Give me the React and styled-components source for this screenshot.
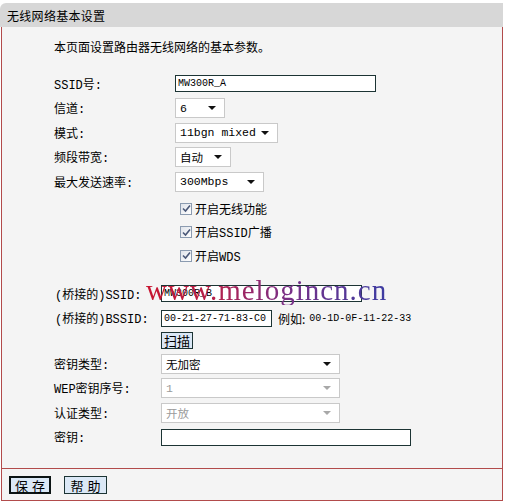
import React from "react";
import styled, { createGlobalStyle } from "styled-components";

const Global = createGlobalStyle`
  html, body {
    margin: 0;
    padding: 0;
    background: #ffffff;
  }
  body {
    font-family: "Noto Sans CJK SC", "Liberation Sans", sans-serif;
    font-size: 12px;
    color: #000;
  }
`;

const Panel = styled.div`
  margin: 3px 0 0 1px;
  width: 502px;
`;

const Header = styled.div`
  height: 24px;
  margin-left: -1px;
  width: 503px;
  background: #d7d7d7;
  border-radius: 6px 0 0 0;
  display: flex;
  align-items: center;
  padding-left: 7px;
  box-sizing: border-box;
  font-size: 12px;
  letter-spacing: 0.3px;
`;

const Body = styled.div`
  position: relative;
  background: #f4f4f4;
  border-left: 1px solid #b24b4b;
  border-right: 1px solid #b24b4b;
  padding: 10px 0 18px 52px;
  box-sizing: border-box;
`;

const Intro = styled.div`
  line-height: 20px;
  margin-bottom: 14.5px;
`;

const Section = styled.div`
  display: flex;
  flex-direction: column;
  margin-top: ${(p) => p.$top || 0}px;
`;

const Row = styled.div`
  position: relative;
  display: grid;
  grid-template-columns: ${(p) => p.$label}px auto;
  align-items: center;
  height: ${(p) => p.$h || 24.5}px;
`;

const Label = styled.span`
  font-family: "Liberation Mono", "Noto Sans CJK SC", monospace;
  font-size: 12px;
  padding-left: ${(p) => p.$indent || 0}px;
  white-space: nowrap;
`;

const Mono = styled.span`
  font-family: "Liberation Mono", monospace;
  font-size: 10px;
`;

const TextInput = styled.div`
  width: ${(p) => p.$w}px;
  height: 17px;
  box-sizing: border-box;
  border: 1px solid #1c3434;
  background: #fff;
  display: flex;
  align-items: center;
  padding-left: 2px;
  font-family: "Liberation Mono", monospace;
  font-size: 10px;
  overflow: hidden;
  white-space: nowrap;
`;

const Select = styled.div`
  width: ${(p) => p.$w}px;
  height: 20px;
  box-sizing: border-box;
  border: 1px solid #c9c9c9;
  background: #fff;
  display: flex;
  align-items: center;
  justify-content: space-between;
  gap: 4px;
  padding: 0 8px 0 4px;
  color: ${(p) => (p.$disabled ? "#9a9a9a" : "#000")};
  font-family: "Liberation Mono", "Noto Sans CJK SC", monospace;
  font-size: 11.5px;
  white-space: nowrap;
`;

const Arrow = styled.span`
  flex: none;
  width: 0;
  height: 0;
  border-left: 4px solid transparent;
  border-right: 4px solid transparent;
  border-top: 4px solid ${(p) => (p.$disabled ? "#a8a8a8" : "#111")};
`;

const CheckRow = styled.div`
  display: flex;
  align-items: center;
  height: 23.5px;
  padding-left: 126px;
  gap: 3px;
  font-family: "Liberation Mono", "Noto Sans CJK SC", monospace;
  font-size: 12px;
`;

const Box = styled.span`
  width: 12px;
  height: 12px;
  box-sizing: border-box;
  border: 1px solid #8b9bb0;
  background: linear-gradient(135deg, #dfe3ea, #ffffff);
  display: flex;
  align-items: center;
  justify-content: center;
`;

const Inline = styled.div`
  display: flex;
  align-items: center;
  gap: 6px;
`;

const Example = styled.span`
  display: flex;
  align-items: center;
  gap: 4px;
  font-size: 12px;
  white-space: nowrap;
`;

const Button = styled.button`
  font-family: "Noto Sans CJK SC", sans-serif;
  font-size: 13px;
  line-height: 1;
  width: ${(p) => (p.$w ? `${p.$w}px` : "auto")};
  height: ${(p) => p.$h || 17}px;
  padding: 0 0 0 ${(p) => (p.$ls ? p.$ls : 2)}px;
  padding-right: ${(p) => (p.$ls ? 0 : 2)}px;
  background: #dbe8f6;
  color: #000;
  border: ${(p) => (p.$bold ? "2px solid #0c1414" : "1px solid #1c3434")};
  border-radius: 0;
  letter-spacing: ${(p) => p.$ls || 0}px;
  white-space: nowrap;
  display: flex;
  align-items: center;
  justify-content: center;
  cursor: pointer;
`;

const Watermark = styled.div`
  position: absolute;
  left: 92px;
  top: -6px;
  font-family: "Liberation Serif", serif;
  font-size: 29px;
  line-height: 29px;
  letter-spacing: 1px;
  white-space: nowrap;
  background: linear-gradient(90deg, #c8142f 0%, #b5204a 28%, #7a2f86 58%, #3c3ca2 100%);
  -webkit-background-clip: text;
  background-clip: text;
  color: transparent;
  pointer-events: none;
`;

const Footer = styled.div`
  height: 29px;
  background: #f4f4f4;
  border: 1px solid #b24b4b;
  display: flex;
  align-items: center;
  gap: 13px;
  padding-left: 7px;
  padding-top: 2px;
  box-sizing: content-box;
`;

const Check = () => (
  <Box>
    <svg width="9" height="9" viewBox="0 0 9 9">
      <path d="M1 4.5 L3.5 7 L8 1.5" fill="none" stroke="#4a5878" strokeWidth="1.6" />
    </svg>
  </Box>
);

export default function App() {
  return (
    <>
      <Global />
      <Panel>
        <Header>无线网络基本设置</Header>
        <Body>
          <Intro>本页面设置路由器无线网络的基本参数。</Intro>
          <Section>
            <Row $label={121}>
              <Label>SSID号:</Label>
              <TextInput $w={201}>MW300R_A</TextInput>
            </Row>
            <Row $label={121}>
              <Label>信道:</Label>
              <Select $w={50}>6<Arrow /></Select>
            </Row>
            <Row $label={121}>
              <Label>模式:</Label>
              <Select $w={103}>11bgn mixed<Arrow /></Select>
            </Row>
            <Row $label={121}>
              <Label>频段带宽:</Label>
              <Select $w={56}>自动<Arrow /></Select>
            </Row>
            <Row $label={121}>
              <Label>最大发送速率:</Label>
              <Select $w={89}>300Mbps<Arrow /></Select>
            </Row>
          </Section>
          <Section $top={3}>
            <CheckRow><Check />开启无线功能</CheckRow>
            <CheckRow><Check />开启SSID广播</CheckRow>
            <CheckRow><Check />开启WDS</CheckRow>
          </Section>
          <Section $top={14}>
            <Row $label={107}>
              <Label $indent={1}>(桥接的)SSID:</Label>
              <TextInput $w={201}>MW300R_B</TextInput>
              <Watermark>www.melogincn.cn</Watermark>
            </Row>
            <Row $label={107}>
              <Label $indent={1}>(桥接的)BSSID:</Label>
              <Inline>
                <TextInput $w={111}>00-21-27-71-83-C0</TextInput>
                <Example>例如: <Mono>00-1D-0F-11-22-33</Mono></Example>
              </Inline>
            </Row>
            <Row $label={107} $h={20}>
              <span />
              <Inline>
                <Button>扫描</Button>
              </Inline>
            </Row>
          </Section>
          <Section $top={1}>
            <Row $label={107}>
              <Label>密钥类型:</Label>
              <Select $w={179}>无加密<Arrow /></Select>
            </Row>
            <Row $label={107}>
              <Label>WEP密钥序号:</Label>
              <Select $w={179} $disabled>1<Arrow $disabled /></Select>
            </Row>
            <Row $label={107}>
              <Label>认证类型:</Label>
              <Select $w={179} $disabled>开放<Arrow $disabled /></Select>
            </Row>
            <Row $label={107}>
              <Label>密钥:</Label>
              <TextInput $w={250} />
            </Row>
          </Section>
        </Body>
        <Footer>
          <Button $bold $w={42} $h={18} $ls={4}>保存</Button>
          <Button $w={43} $h={18} $ls={4}>帮助</Button>
        </Footer>
      </Panel>
    </>
  );
}
